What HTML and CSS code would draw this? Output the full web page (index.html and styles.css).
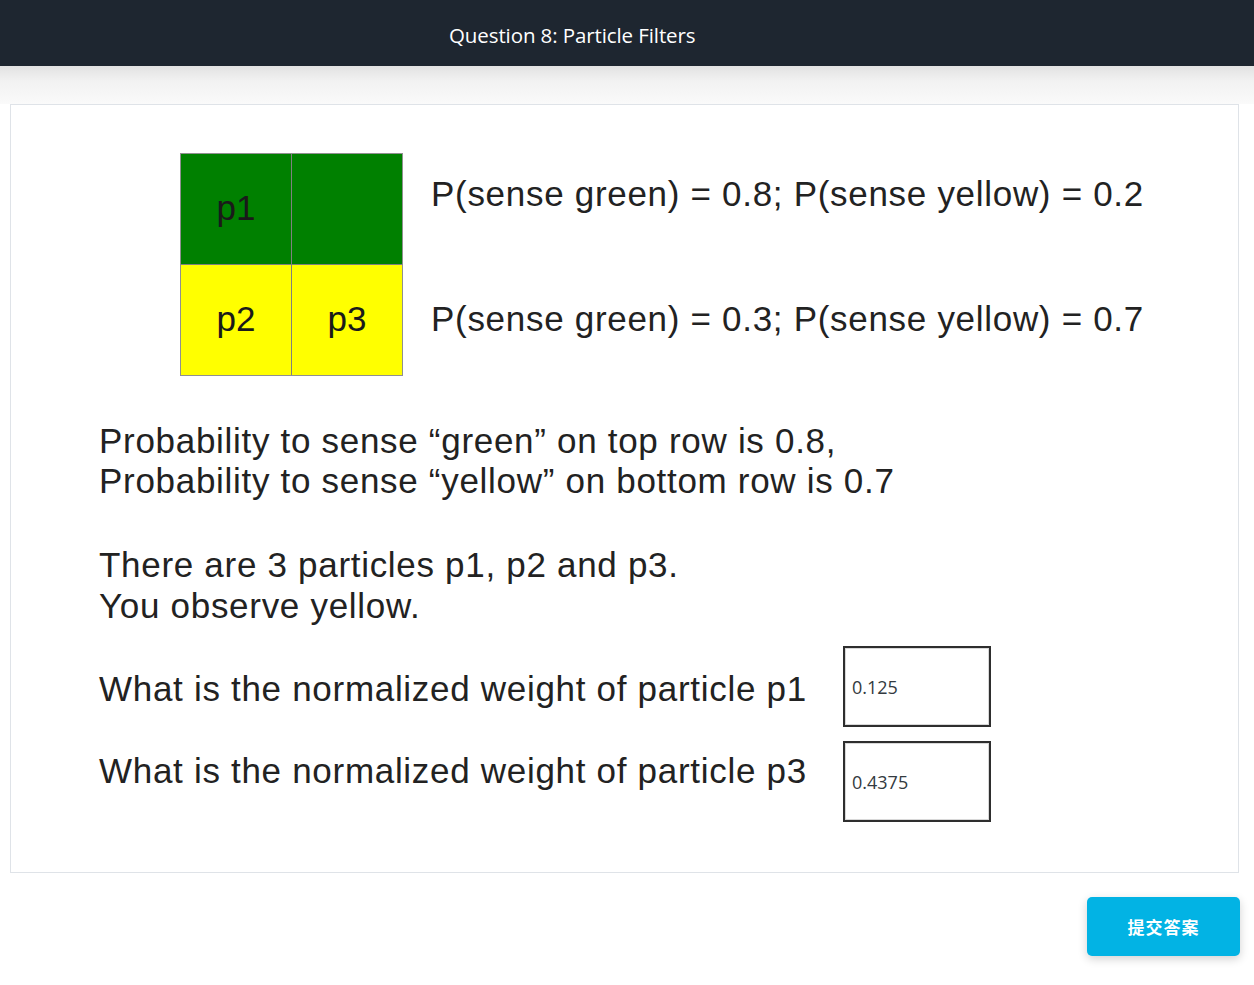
FILE: index.html
```html
<!DOCTYPE html>
<html lang="en">
<head>
<meta charset="utf-8">
<title>Question 8: Particle Filters</title>
<link rel="stylesheet" href="styles.css">
</head>
<body>
<header class="topbar">
  <h1 class="topbar-title">Question 8: Particle Filters</h1>
</header>
<div class="shade"></div>
<main class="page">
  <section class="card">
    <div class="world">
      <div class="grid">
        <div class="cell green">p1</div>
        <div class="cell green"></div>
        <div class="cell yellow">p2</div>
        <div class="cell yellow">p3</div>
      </div>
      <div class="probs">
        <p class="prob prob-top">P(sense green) = 0.8; P(sense yellow) = 0.2</p>
        <p class="prob prob-bottom">P(sense green) = 0.3; P(sense yellow) = 0.7</p>
      </div>
    </div>
    <p class="para para-first">Probability to sense “green” on top row is 0.8,<br>Probability to sense “yellow” on bottom row is 0.7</p>
    <p class="para para-second">There are 3 particles p1, p2 and p3.<br>You observe yellow.</p>
    <div class="questions">
      <div class="question">
        <span class="q-label">What is the normalized weight of particle p1</span>
        <input class="answer" type="text" value="0.125">
      </div>
      <div class="question question-raised">
        <span class="q-label">What is the normalized weight of particle p3</span>
        <input class="answer" type="text" value="0.4375">
      </div>
    </div>
  </section>
  <div class="actions">
    <button class="submit" type="button">提交答案</button>
  </div>
</main>
</body>
</html>
```

FILE: styles.css
```css
* { box-sizing: border-box; }
html, body { margin: 0; padding: 0; }
body {
  background: #ffffff;
  font-family: "Liberation Sans", Arial, sans-serif;
  width: 1254px;
  height: 985px;
  overflow: hidden;
}
.topbar {
  height: 66px;
  background: #1e2630;
  display: flex;
  align-items: center;
  padding-left: 449px;
}
.topbar-title {
  margin: 0;
  font-family: "Open Sans", sans-serif;
  font-weight: 400;
  font-size: 20.5px;
  color: #ffffff;
  letter-spacing: -0.1px;
  line-height: 1;
  padding-top: 4px;
}
.shade {
  height: 38px;
  background: linear-gradient(#e2e2e2 0%, #f2f2f2 40%, #fafafa 100%);
}
.page {
  margin-top: -38px;
  padding-top: 38px;
}
.card {
  margin: 0 15px 0 10px;
  background: #ffffff;
  border: 1px solid #dfe3e8;
  padding: 48px 0 50px 88px;
  color: #222222;
  font-size: 35px;
  letter-spacing: 0.7px;
}
.world {
  display: flex;
  align-items: flex-start;
  margin-left: 81px;
}
.grid {
  display: grid;
  grid-template-columns: 110px 110px;
  grid-template-rows: 110px 110px;
  gap: 1px;
  background: #808080;
  border: 1px solid #909090;
  width: 223px;
  height: 223px;
}
.cell {
  display: flex;
  align-items: center;
  justify-content: center;
  font-size: 35px;
  color: #1a1a1a;
  letter-spacing: 0;
  padding-bottom: 2px;
}
.green { background: #008000; }
.yellow { background: #ffff00; }
.probs {
  margin-left: 28px;
}
.prob {
  margin: 0;
  line-height: 40px;
  white-space: nowrap;
}
.prob-top { margin-top: 21px; }
.prob-bottom { margin-top: 85px; }
.para {
  margin: 0;
}
.para-first { margin-top: 45px; line-height: 40px; }
.para-second { margin-top: 43px; line-height: 41px; }
.questions {
  margin-top: 20px;
  display: flex;
  flex-direction: column;
  gap: 14px;
}
.question {
  display: flex;
  align-items: center;
  height: 81px;
}
.q-label {
  width: 744px;
  line-height: 41px;
  white-space: nowrap;
  padding-top: 4px;
}
.question-raised {
  align-items: flex-start;
}
.question-raised .q-label {
  padding-top: 0;
  margin-top: 9px;
}
.answer {
  width: 148px;
  height: 81px;
  border: 2px solid #2e2e2e;
  box-shadow: inset 0 0 0 1px #d8d8d8;
  background: #ffffff;
  font-family: "Open Sans", sans-serif;
  font-size: 18px;
  color: #333a40;
  padding: 0 0 0 7px;
  letter-spacing: 0;
  outline: none;
}
.actions {
  display: flex;
  justify-content: flex-end;
  padding: 24px 14px 0 0;
}
.submit {
  width: 153px;
  height: 59px;
  border: none;
  border-radius: 5px;
  background: #02b3e4;
  color: #ffffff;
  font-family: "Noto Sans CJK SC", sans-serif;
  font-weight: 700;
  font-size: 17px;
  letter-spacing: 1px;
  box-shadow: 0 3px 10px rgba(0, 0, 0, 0.18);
  cursor: pointer;
}
```
